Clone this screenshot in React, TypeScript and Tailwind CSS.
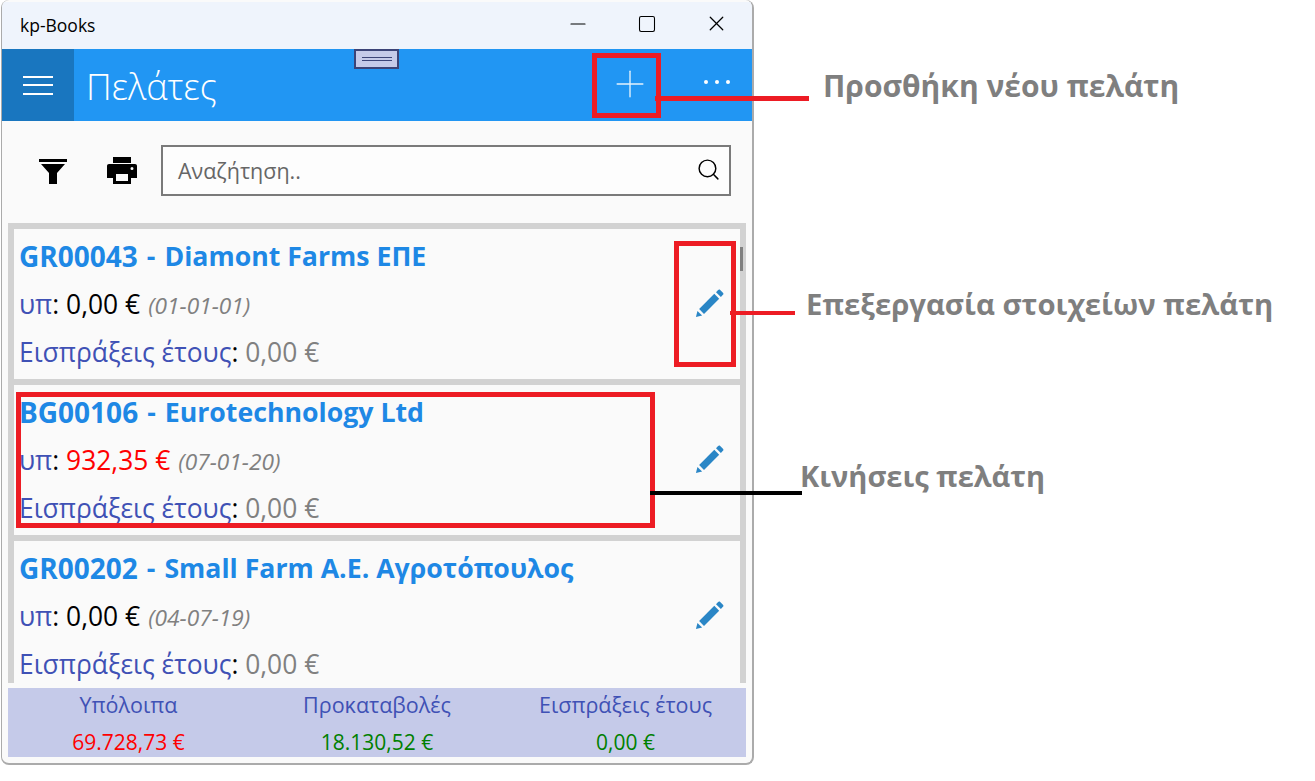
import { Minus, Square, X, Plus, Search } from "lucide-react";

const customers = [
  { code: "GR00043", name: "Diamont Farms ΕΠΕ", balance: "0,00 €", date: "(01-01-01)", red: false },
  { code: "BG00106", name: "Eurotechnology Ltd", balance: "932,35 €", date: "(07-01-20)", red: true },
  { code: "GR00202", name: "Small Farm A.E. Αγροτόπουλος", balance: "0,00 €", date: "(04-07-19)", red: false },
];

function PencilIcon() {
  return (
    <svg width="30" height="30" viewBox="0 0 32 32" className="text-[#2a86c6]">
      <path fill="currentColor" d="M1 31l1.6-6.6 5 5z" />
      <path fill="currentColor" d="M4.4 22.4 20.6 6.2l5.2 5.2L9.6 27.6z" />
      <path fill="currentColor" d="M22.4 4.4l2.2-2.2c.8-.8 1.6-.8 2.3-.1l2.9 2.9c.7.7.7 1.6 0 2.3l-2.2 2.2z" />
    </svg>
  );
}

function CustomerCard({ code, name, balance, date, red }: (typeof customers)[number]) {
  return (
    <div className="flex h-[150px] shrink-0 bg-[#fafafa]">
      <div className="min-w-0 flex-1 pl-[5px] pt-[3px]">
        <div className="flex h-12 items-center text-[26.7px] leading-[36px] font-bold whitespace-nowrap text-[#1e88e5]">
          <span className="text-[28px]">{code}</span>
          <span className="mx-[9px]">-</span>
          <span>{name}</span>
        </div>
        <div className="flex h-12 items-baseline text-[26.4px] leading-[48px]">
          <span className="text-[#3f51b5]">υπ</span>
          <span>:&nbsp;</span>
          <span className={red ? "text-[#ff0000]" : "text-black"}>{balance}</span>
          <span className="ml-2 text-[22.7px] text-[#808080] italic">{date}</span>
        </div>
        <div className="flex h-12 items-center text-[26.4px] leading-[30px] whitespace-pre">
          <span className="text-[#3f51b5]">Εισπράξεις έτους</span>
          <span>: </span>
          <span className="text-[#808080]">0,00 €</span>
        </div>
      </div>
      <div className="flex w-[60px] shrink-0 items-center justify-center pb-[2px]">
        <PencilIcon />
      </div>
    </div>
  );
}

function Total({ label, value, color }: { label: string; value: string; color: string }) {
  return (
    <div className="flex flex-col items-center">
      <div className="h-[40px] text-[21.5px] leading-[33px] text-[#3f51b5]">{label}</div>
      <div className={`text-[21px] leading-[29px] ${color}`}>{value}</div>
    </div>
  );
}

export default function App() {
  return (
    <div className="relative h-[781px] w-[1315px] overflow-hidden bg-white font-['Open_Sans',sans-serif] text-black">
      {/* app window */}
      <div className="ml-[1px] flex h-[765px] w-[753px] flex-col overflow-hidden rounded-lg border-r-2 border-b-2 border-l border-[#ababab] bg-[#fafafa] pt-[2px]">
        <div className="flex h-[47px] shrink-0 items-center bg-[#eff4fc] pl-[18px]">
          <span className="flex-1 text-[17.5px]">kp-Books</span>
          <div className="flex h-full items-center pb-1">
            <Minus size={24} strokeWidth={1.2} className="mr-[47px]" />
            <Square size={20} strokeWidth={1.3} className="mr-[47px]" />
            <X size={25} strokeWidth={1.2} className="mr-[23px]" />
          </div>
        </div>
        <div className="flex h-[72px] shrink-0 items-center bg-[#2196f3] text-white">
          <div className="flex h-full w-[72px] flex-col items-center justify-center gap-[6.5px] bg-[#1976bf]">
            <span className="h-[2px] w-[30px] bg-white" />
            <span className="h-[2px] w-[30px] bg-white" />
            <span className="h-[2px] w-[30px] bg-white" />
          </div>
          <span className="ml-3 flex-1 pt-[3px] text-[36px] font-light">Πελάτες</span>
          <Plus size={44} strokeWidth={0.75} className="mr-[52px] mb-[3px] text-[#e3f2fd]" />
          <div className="mr-[22px] mb-[6px] flex gap-[7px]">
            <span className="size-[4px] rounded-full bg-white" />
            <span className="size-[4px] rounded-full bg-white" />
            <span className="size-[4px] rounded-full bg-white" />
          </div>
        </div>
        <div className="flex h-[102px] shrink-0 items-center pb-[3px]">
          <svg width="30" height="30" viewBox="0 0 30 30" className="ml-[36px]">
            <path d="M1 3h28v3H1zM3 8h24l-8 9v11h-8V17z" fill="black" />
          </svg>
          <svg width="32" height="30" viewBox="0 0 32 30" className="ml-[38px]">
            <path fillRule="evenodd" fill="black" d="M7 1h18v6H7zM3 8h26c1.2 0 2 .8 2 2v12h-6v6H7v-6H1V10c0-1.2.8-2 2-2zm7 10v7h12v-7zm16-7a1.5 1.5 0 1 0 0 3 1.5 1.5 0 0 0 0-3z" />
          </svg>
          <div className="ml-[23px] flex h-[51px] w-[570px] items-center border-2 border-[#7a7a7a] bg-[#fdfdfd] pr-[8px] pl-[15px]">
            <span className="flex-1 pt-[2px] text-[21.5px] text-[#666]">Αναζήτηση..</span>
            <Search size={25} strokeWidth={1.4} className="mb-[2px]" />
          </div>
        </div>
        <div className="mx-[6px] flex h-[460px] shrink-0 flex-col gap-[6px] overflow-hidden bg-[#d2d2d2] py-[6px] pr-[6px] pl-[6px]">
          {customers.map((c) => (
            <CustomerCard key={c.code} {...c} />
          ))}
        </div>
        <div className="mx-[6px] mt-[5px] grid h-[69px] shrink-0 grid-cols-[241px_256px_241px] justify-items-center bg-[#c5cae9]">
          <Total label="Υπόλοιπα" value="69.728,73 €" color="text-[#ff0000]" />
          <Total label="Προκαταβολές" value="18.130,52 €" color="text-[#008000]" />
          <Total label="Εισπράξεις έτους" value="0,00 €" color="text-[#008000]" />
        </div>
      </div>

      {/* splitter handle */}
      <div className="absolute top-[49px] left-[354px] flex h-5 w-[45px] flex-col items-center justify-center gap-[2px] border-2 border-[#3c4478] bg-[#c5cae9]">
        <span className="h-px w-[30px] bg-[#3c4478]" />
        <span className="h-px w-[30px] bg-[#3c4478]" />
      </div>

      {/* scrollbar thumb */}
      <div className="absolute top-[247px] left-[740px] h-6 w-[3px] bg-[#808080]" />

      {/* annotations */}
      <div className="absolute top-[53px] left-[592px] h-[65px] w-[69px] border-[5px] border-[#ed1c24]" />
      <div className="absolute top-[96px] left-[655px] h-[5px] w-[154px] bg-[#ed1c24]" />
      <div className="absolute top-[241px] left-[674px] h-[126px] w-[62px] border-[5px] border-[#ed1c24]" />
      <div className="absolute top-[311px] left-[730px] h-[4px] w-[65px] bg-[#ed1c24]" />
      <div className="absolute top-[392px] left-[16px] h-[136px] w-[639px] border-[5px] border-[#ed1c24]" />
      <div className="absolute top-[491px] left-[650px] h-[4px] w-[152px] bg-black" />
      <div className="absolute top-[63px] left-[823px] text-[30px] font-bold whitespace-nowrap text-[#7f7f7f]">Προσθήκη νέου πελάτη</div>
      <div className="absolute top-[283px] left-[806px] text-[29.3px] font-bold whitespace-nowrap text-[#7f7f7f]">Επεξεργασία στοιχείων πελάτη</div>
      <div className="absolute top-[454px] left-[800px] text-[29px] font-bold whitespace-nowrap text-[#7f7f7f]">Κινήσεις πελάτη</div>
    </div>
  );
}
